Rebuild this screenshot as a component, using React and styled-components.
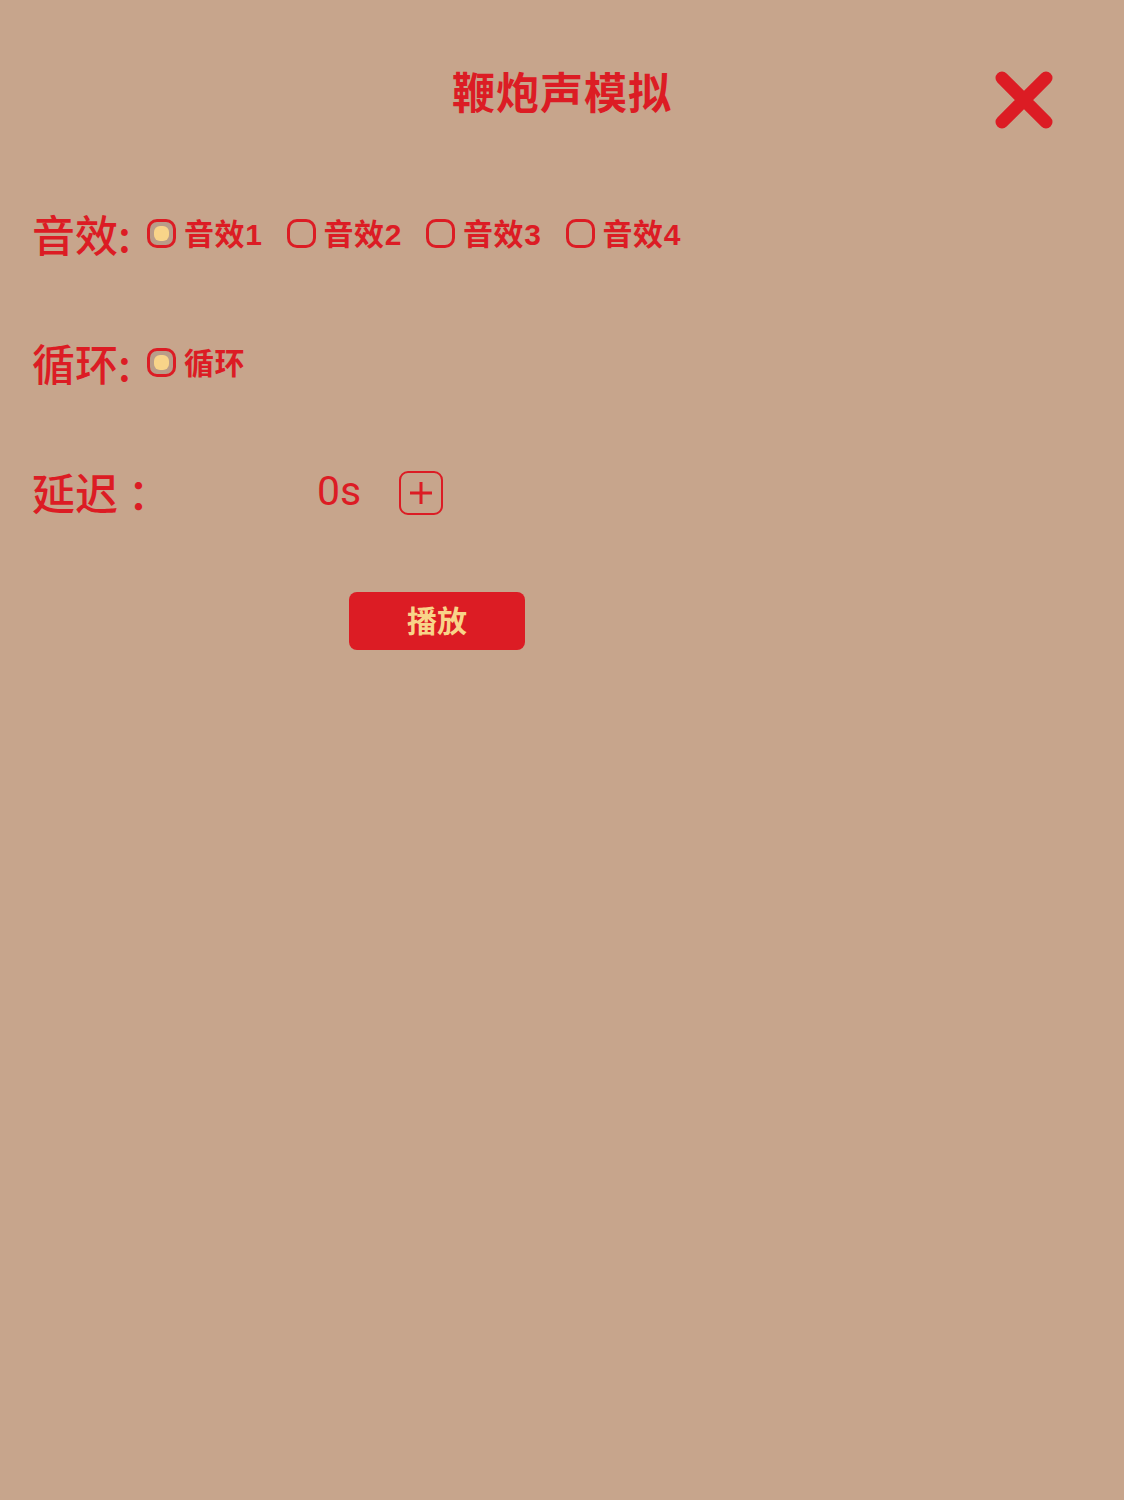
import styled, { createGlobalStyle } from "styled-components";
import { useState } from "react";

const RED = "#dc1c24";
const YELLOW = "#f8d489";

const GlobalStyle = createGlobalStyle`
  html, body {
    margin: 0;
    padding: 0;
    background-color: #c7a58c;
  }
  body {
    font-family: "Liberation Sans", "Noto Sans CJK SC", sans-serif;
    min-height: 1500px;
  }
`;

function App() {
  const [sound, setSound] = useState(1);
  const [loop, setLoop] = useState(true);
  const [delay, setDelay] = useState(0);

  return (
    <Page>
      <GlobalStyle />
      <Header>
        <Title>鞭炮声模拟</Title>
        <CloseButton aria-label="关闭">
          <svg width="60" height="60" viewBox="0 0 60 60">
            <path
              d="M8 8 L52 52 M52 8 L8 52"
              stroke={RED}
              strokeWidth="13"
              strokeLinecap="round"
            />
          </svg>
        </CloseButton>
      </Header>

      <Form>
        <Row>
          <Label>音效:</Label>
          <Options>
            {[1, 2, 3, 4].map((n) => (
              <Option key={n} onClick={() => setSound(n)}>
                <Box $checked={sound === n} />
                <OptionText>音效{n}</OptionText>
              </Option>
            ))}
          </Options>
        </Row>

        <Row>
          <Label>循环:</Label>
          <Options>
            <Option onClick={() => setLoop(!loop)}>
              <Box $checked={loop} />
              <OptionText>循环</OptionText>
            </Option>
          </Options>
        </Row>

        <Row>
          <Label>延迟 ：</Label>
          <DelayValue>{delay}s</DelayValue>
          <PlusButton onClick={() => setDelay(delay + 1)} aria-label="增加">
            <svg width="24" height="24" viewBox="0 0 24 24">
              <path d="M12 1 V23 M1 12 H23" stroke={RED} strokeWidth="3" />
            </svg>
          </PlusButton>
        </Row>

        <PlayRow>
          <PlayButton>播放</PlayButton>
        </PlayRow>
      </Form>
    </Page>
  );
}

const Page = styled.div`
  width: 1124px;
  min-height: 1500px;
  background-color: #c7a58c;
`;

const Header = styled.header`
  position: relative;
  display: flex;
  justify-content: center;
  padding-top: 61px;
  height: 83px;
`;

const Title = styled.h1`
  margin: 0;
  font-family: "Noto Sans CJK SC", sans-serif;
  font-size: 43px;
  line-height: 58px;
  font-weight: 700;
  color: ${RED};
  letter-spacing: 1px;
`;

const CloseButton = styled.button`
  position: absolute;
  top: 70px;
  left: 994px;
  width: 60px;
  height: 60px;
  padding: 0;
  border: none;
  background: none;
  cursor: pointer;
  display: flex;
`;

const Form = styled.div`
  display: flex;
  flex-direction: column;
  padding: 60px 0 0 32px;
  gap: 71px;
`;

const Row = styled.div`
  display: flex;
  align-items: center;
  height: 58px;
`;

const Label = styled.span`
  font-family: "Noto Sans CJK SC", sans-serif;
  font-size: 43px;
  font-weight: 500;
  color: ${RED};
  white-space: pre;
  width: 115px;
`;

const Options = styled.div`
  display: flex;
  gap: 24px;
`;

const Option = styled.label`
  display: flex;
  align-items: center;
  gap: 8px;
  cursor: pointer;
`;

const Box = styled.span`
  box-sizing: border-box;
  width: 29px;
  height: 29px;
  border: 3px solid ${RED};
  border-radius: 10px;
  display: flex;
  align-items: center;
  justify-content: center;
  background: ${({ $checked }) => ($checked ? "#b99d89" : "transparent")};

  &::after {
    content: "";
    display: ${({ $checked }) => ($checked ? "block" : "none")};
    width: 15px;
    height: 15px;
    border-radius: 6px;
    background: ${YELLOW};
  }
`;

const OptionText = styled.span`
  font-size: 30px;
  font-weight: 700;
  color: ${RED};
  line-height: 40px;
  padding-top: 3px;
  letter-spacing: 0.6px;
`;

const DelayValue = styled.span`
  margin-left: 170px;
  font-family: "Roboto", "Noto Sans", sans-serif;
  font-size: 41px;
  color: ${RED};
  width: 82px;
`;

const PlusButton = styled.button`
  box-sizing: border-box;
  width: 44px;
  height: 44px;
  margin-top: 3px;
  border: 2.5px solid ${RED};
  border-radius: 9px;
  background: none;
  padding: 0;
  display: flex;
  align-items: center;
  justify-content: center;
  cursor: pointer;
`;

const PlayRow = styled.div`
  display: flex;
  padding-left: 317px;
  margin-top: 1px;
`;

const PlayButton = styled.button`
  width: 176px;
  height: 58px;
  padding: 0 0 4px;
  border: none;
  border-radius: 8px;
  background-color: ${RED};
  color: ${YELLOW};
  font-family: "Noto Sans CJK SC", sans-serif;
  font-size: 30px;
  font-weight: 700;
  cursor: pointer;
`;

export default App;
